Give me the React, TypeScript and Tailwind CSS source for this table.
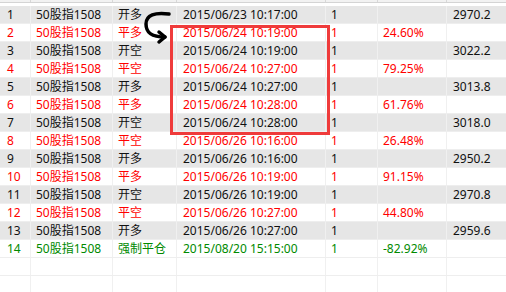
import React from "react";

type Row = { n: string; c: "k" | "r" | "g" | ""; name: string; act: string; dt: string; q: string; pct: string; price: string };

const rows: Row[] = [
  { n: "1", c: "k", name: "50股指1508", act: "开多", dt: "2015/06/23 10:17:00", q: "1", pct: "", price: "2970.2" },
  { n: "2", c: "r", name: "50股指1508", act: "平多", dt: "2015/06/24 10:19:00", q: "1", pct: "24.60%", price: "" },
  { n: "3", c: "k", name: "50股指1508", act: "开空", dt: "2015/06/24 10:19:00", q: "1", pct: "", price: "3022.2" },
  { n: "4", c: "r", name: "50股指1508", act: "平空", dt: "2015/06/24 10:27:00", q: "1", pct: "79.25%", price: "" },
  { n: "5", c: "k", name: "50股指1508", act: "开多", dt: "2015/06/24 10:27:00", q: "1", pct: "", price: "3013.8" },
  { n: "6", c: "r", name: "50股指1508", act: "平多", dt: "2015/06/24 10:28:00", q: "1", pct: "61.76%", price: "" },
  { n: "7", c: "k", name: "50股指1508", act: "开空", dt: "2015/06/24 10:28:00", q: "1", pct: "", price: "3018.0" },
  { n: "8", c: "r", name: "50股指1508", act: "平空", dt: "2015/06/26 10:16:00", q: "1", pct: "26.48%", price: "" },
  { n: "9", c: "k", name: "50股指1508", act: "开多", dt: "2015/06/26 10:16:00", q: "1", pct: "", price: "2950.2" },
  { n: "10", c: "r", name: "50股指1508", act: "平多", dt: "2015/06/26 10:19:00", q: "1", pct: "91.15%", price: "" },
  { n: "11", c: "k", name: "50股指1508", act: "开空", dt: "2015/06/26 10:19:00", q: "1", pct: "", price: "2970.8" },
  { n: "12", c: "r", name: "50股指1508", act: "平空", dt: "2015/06/26 10:27:00", q: "1", pct: "44.80%", price: "" },
  { n: "13", c: "k", name: "50股指1508", act: "开多", dt: "2015/06/26 10:27:00", q: "1", pct: "", price: "2959.6" },
  { n: "14", c: "g", name: "50股指1508", act: "强制平仓", dt: "2015/08/20 15:15:00", q: "1", pct: "-82.92%", price: "" },
  { n: "", c: "", name: "", act: "", dt: "", q: "", pct: "", price: "" },
  { n: "", c: "", name: "", act: "", dt: "", q: "", pct: "", price: "" },
];

const colorCls = (c: Row["c"]) =>
  c === "r" ? "text-[#ff0000]" : c === "g" ? "text-[#008a00]" : "text-[#111111]";

export default function App() {
  return (
    <div
      className="relative w-[506px] h-[292px] overflow-hidden bg-white text-[12px] leading-none"
      style={{ fontFamily: '"Noto Sans", "Noto Sans CJK SC", sans-serif' }}
    >
      {/* header remnant */}
      <div className="flex h-[2px] bg-[#f2f2f2]">
        <div className="w-[31px] border-r border-[#d8d8d8]" />
        <div className="w-[82px] border-r border-[#d8d8d8]" />
        <div className="w-[64px] border-r border-[#d8d8d8]" />
        <div className="w-[149px] border-r border-[#d8d8d8]" />
        <div className="w-[52px] border-r border-[#d8d8d8]" />
        <div className="w-[69px] border-r border-[#d8d8d8]" />
        <div className="flex-1" />
      </div>
      <div className="h-[1px] bg-[#d4d4d4]" />
      <div className="h-[3px] bg-white" />
      <div className="flex flex-col">
        {rows.map((r, i) => {
          const gray = i % 2 === 0 && i < 13;
          return (
            <div
              key={i}
              className={`flex h-[18px] items-center border-b border-[#eeeeee] ${gray ? "bg-[#e6e6e6]" : "bg-white"} ${colorCls(r.c)}`}
            >
              <div className="w-[31px] h-full flex items-center pl-[7px] border-r border-[#f0f0f0]">{r.n}</div>
              <div className="w-[82px] h-full flex items-center pl-[5px] border-r border-[#f0f0f0]">{r.name}</div>
              <div className="w-[64px] h-full flex items-center pl-[5px] border-r border-[#f0f0f0]">{r.act}</div>
              <div className="w-[149px] h-full flex items-center pl-[6px] border-r border-[#f0f0f0]">{r.dt}</div>
              <div className="w-[52px] h-full flex items-center pl-[5px] border-r border-[#f0f0f0]">{r.q}</div>
              <div className="w-[69px] h-full flex items-center pl-[5px] border-r border-[#f0f0f0]">{r.pct}</div>
              <div className="flex-1 h-full flex items-center pl-[6px]">{r.price}</div>
            </div>
          );
        })}
      </div>

      {/* red highlight rectangle */}
      <div className="absolute left-[170px] top-[25px] w-[160px] h-[110px] border-[3px] border-[#ef3b3b]" />

      {/* curved arrow */}
      <svg className="absolute left-0 top-0" width="506" height="292" viewBox="0 0 506 292">
        <path
          d="M169 14 C 155 12, 146 15, 146 24 C 146 33, 152 37, 165 37"
          fill="none"
          stroke="#000"
          strokeWidth="3.5"
          strokeLinecap="round"
        />
        <path d="M159 32 L165 37 L159 42" fill="none" stroke="#000" strokeWidth="3.5" strokeLinecap="round" strokeLinejoin="round" />
      </svg>
    </div>
  );
}
